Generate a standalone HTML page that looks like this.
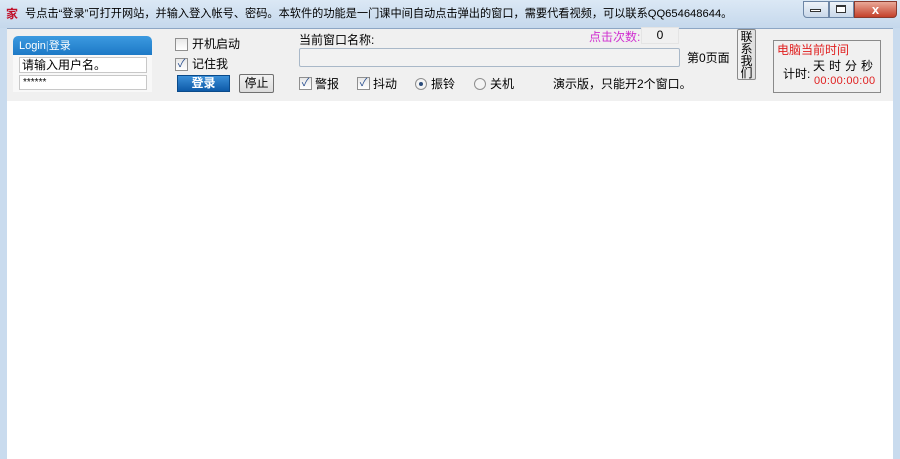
<!DOCTYPE html><html><head><meta charset="utf-8"><style>
*{margin:0;padding:0;box-sizing:border-box}
body{width:900px;height:459px;overflow:hidden;position:relative;font-family:"Liberation Sans","Noto Sans CJK SC",sans-serif;font-size:12px;color:#000;background:#c9dbee}
.a{position:absolute;white-space:nowrap;line-height:14px}
.cb{position:absolute;width:13px;height:13px;border:1px solid #8f8f8f;background:linear-gradient(#e8e8e8,#fff);font-size:11px;line-height:11px;text-align:center;color:#2a4f8f}
.rb{position:absolute;width:12px;height:12px;border:1px solid #8f8f8f;border-radius:50%;background:#f4f4f4}
</style></head><body>
<div class="a" style="left:0;top:0;width:900px;height:28px;background:linear-gradient(#dbe8f5,#c5d8ec)"></div>
<div class="a" style="left:6px;top:7px;color:#c0102a;font-size:12px;font-weight:bold">家</div>
<div class="a" style="left:25px;top:7px;font-size:11.2px">号点击“登录”可打开网站，并输入登入帐号、密码。本软件的功能是一门课中间自动点击弹出的窗口，需要代看视频，可以联系QQ654648644。</div>
<div class="a" style="left:803px;top:1px;width:26px;height:17px;border:1px solid #6d86a6;border-radius:0 0 0 4px;background:linear-gradient(#eef3f9,#c9d8ea)"></div>
<div class="a" style="left:810px;top:9px;width:11px;height:3px;border:1px solid #333;background:#fff"></div>
<div class="a" style="left:829px;top:1px;width:25px;height:17px;border:1px solid #6d86a6;background:linear-gradient(#eef3f9,#c9d8ea)"></div>
<div class="a" style="left:836px;top:5px;width:10px;height:8px;border:1px solid #333;border-top-width:2px;background:#fff"></div>
<div class="a" style="left:854px;top:1px;width:43px;height:17px;border:1px solid #8a3a2e;border-radius:0 0 4px 0;background:linear-gradient(#e9a898,#c4402a);color:#fff;font-weight:bold;text-align:center;line-height:15px;font-size:13px">x</div>
<div class="a" style="left:7px;top:28px;width:886px;height:73px;background:#f0f0f0;border-top:1px solid #8da6c4"></div>
<div class="a" style="left:7px;top:101px;width:886px;height:358px;background:#fff"></div>
<div class="a" style="left:13px;top:36px;width:139px;height:56px;background:#f8f8f8;border-radius:5px 5px 0 0"></div>
<div class="a" style="left:13px;top:36px;width:139px;height:19px;background:linear-gradient(#3c9ae0,#1d79c6);border-radius:5px 5px 0 0;color:#fff;font-size:11px;line-height:20px;padding-left:6px">Login<span style="color:#9cc9ef">|</span>登录</div>
<div class="a" style="left:19px;top:57px;width:128px;height:16px;border:1px solid #c8c8c8;background:#fff;font-size:12px;line-height:14px;padding-left:2px">请输入用户名。</div>
<div class="a" style="left:19px;top:75px;width:128px;height:15px;border:1px solid #c8c8c8;background:#fff;font-size:10px;line-height:14px;padding-left:3px">******</div>
<div class="cb" style="left:175px;top:38px"></div><div class="a" style="left:192px;top:37px">开机启动</div>
<div class="cb" style="left:175px;top:58px">✓</div><div class="a" style="left:192px;top:57px">记住我</div>
<div class="a" style="left:177px;top:75px;width:53px;height:17px;background:linear-gradient(#3a8fd8,#0d5aa8);color:#fff;font-weight:bold;text-align:center;line-height:15px;border:1px solid #0a4a8a">登录</div>
<div class="a" style="left:239px;top:74px;width:35px;height:19px;border:1px solid #707070;border-radius:2px;background:linear-gradient(#f2f2f2,#dcdcdc);text-align:center;line-height:17px">停止</div>
<div class="a" style="left:299px;top:33px">当前窗口名称:</div>
<div class="a" style="left:589px;top:30px;color:#d030d0">点击次数:</div>
<div class="a" style="left:641px;top:27px;width:38px;height:17px;border:1px solid #e4e4e4;background:#f0f0f0;text-align:center;line-height:15px">0</div>
<div class="a" style="left:299px;top:48px;width:381px;height:19px;border:1px solid #a9b8c8;border-radius:2px;background:#f2f2f2"></div>
<div class="a" style="left:687px;top:51px">第0页面</div>
<div class="cb" style="left:299px;top:77px">✓</div><div class="a" style="left:315px;top:77px">警报</div>
<div class="cb" style="left:357px;top:77px">✓</div><div class="a" style="left:373px;top:77px">抖动</div>
<div class="rb" style="left:415px;top:78px"><div style="margin:3px;width:4px;height:4px;border-radius:50%;background:#2b4b7a"></div></div><div class="a" style="left:431px;top:77px">振铃</div>
<div class="rb" style="left:474px;top:78px"></div><div class="a" style="left:490px;top:77px">关机</div>
<div class="a" style="left:553px;top:77px">演示版，只能开2个窗口。</div>
<div class="a" style="left:737px;top:29px;width:19px;height:51px;border:1px solid #8a8a8a;border-radius:2px;background:linear-gradient(90deg,#f2f2f2,#dedede);font-size:12px;line-height:12px;text-align:center;white-space:normal;padding-top:1px">联系我们</div>
<div class="a" style="left:773px;top:40px;width:108px;height:53px;border:1px solid #8a8a8a"></div>
<div class="a" style="left:777px;top:43px;color:#e02020">电脑当前时间</div>
<div class="a" style="left:783px;top:67px">计时:</div>
<div class="a" style="left:813px;top:59px;font-size:12px;letter-spacing:4px">天时分秒</div>
<div class="a" style="left:814px;top:74px;color:#e02020;font-size:11px;letter-spacing:0.3px">00:00:00:00</div>
</body></html>
